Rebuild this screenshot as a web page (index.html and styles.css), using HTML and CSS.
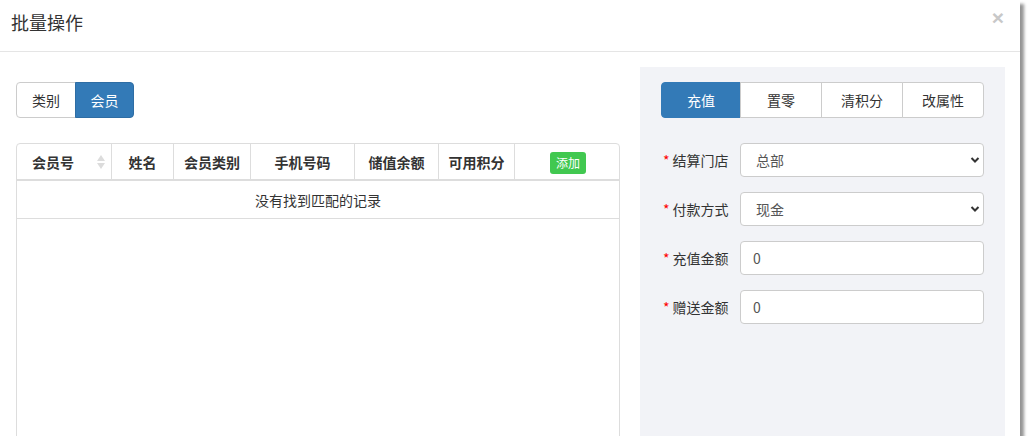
FILE: index.html
```html
<!DOCTYPE html>
<html lang="zh-CN">
<head>
<meta charset="utf-8">
<title>批量操作</title>
<link rel="stylesheet" href="styles.css">
</head>
<body>
<div class="modal">
  <div class="modal-header">
    <h4 class="modal-title">批量操作</h4>
    <button class="close" type="button">×</button>
  </div>
  <div class="modal-body">
    <div class="left">
      <div class="btn-group">
        <button class="btn" type="button">类别</button>
        <button class="btn active" type="button">会员</button>
      </div>
      <div class="table-wrap">
        <table class="grid">
          <colgroup>
            <col class="c1"><col class="c2"><col class="c3"><col class="c4"><col class="c5"><col class="c6"><col class="c7">
          </colgroup>
          <thead>
            <tr>
              <th class="sortable">会员号<span class="sort"><svg width="8" height="16" viewBox="0 0 8 16"><path d="M4 1 L8 7 L0 7 Z" fill="#dcdcdc"/><path d="M4 15 L8 9 L0 9 Z" fill="#dcdcdc"/></svg></span></th>
              <th>姓名</th>
              <th>会员类别</th>
              <th>手机号码</th>
              <th>储值余额</th>
              <th>可用积分</th>
              <th><button class="btn-add" type="button">添加</button></th>
            </tr>
          </thead>
          <tbody>
            <tr><td colspan="7" class="empty">没有找到匹配的记录</td></tr>
          </tbody>
        </table>
      </div>
    </div>
    <div class="right">
      <div class="tabs">
        <button class="tab active" type="button">充值</button>
        <button class="tab" type="button">置零</button>
        <button class="tab" type="button">清积分</button>
        <button class="tab" type="button">改属性</button>
      </div>
      <form class="form">
        <div class="row">
          <label class="label"><span class="req">*</span>结算门店</label>
          <div class="select-wrap">
            <select class="control select"><option>总部</option></select>
            <svg class="chev" width="10" height="8" viewBox="0 0 10 8"><path d="M1.5 2 L5 5.5 L8.5 2" fill="none" stroke="#333" stroke-width="2"/></svg>
          </div>
        </div>
        <div class="row">
          <label class="label"><span class="req">*</span>付款方式</label>
          <div class="select-wrap">
            <select class="control select"><option>现金</option></select>
            <svg class="chev" width="10" height="8" viewBox="0 0 10 8"><path d="M1.5 2 L5 5.5 L8.5 2" fill="none" stroke="#333" stroke-width="2"/></svg>
          </div>
        </div>
        <div class="row">
          <label class="label"><span class="req">*</span>充值金额</label>
          <input class="control input" type="text" value="0">
        </div>
        <div class="row">
          <label class="label"><span class="req">*</span>赠送金额</label>
          <input class="control input" type="text" value="0">
        </div>
      </form>
    </div>
  </div>
</div>
</body>
</html>
```

FILE: styles.css
```css
html, body {
  margin: 0;
  padding: 0;
  background: #ffffff;
}
body {
  font-family: "Noto Sans CJK SC", "Liberation Sans", sans-serif;
  font-size: 14px;
  color: #333;
}
.modal {
  width: 1020px;
  height: 436px;
  background: #fff;
  box-shadow: 4px 4px 3px rgba(0, 0, 0, 0.42);
  display: flex;
  flex-direction: column;
  overflow: hidden;
}
.modal-header {
  height: 51px;
  border-bottom: 1px solid #e5e5e5;
  display: flex;
  align-items: center;
  justify-content: space-between;
  padding: 0 16px 0 11px;
  flex: none;
}
.modal-title {
  margin: 0;
  font-size: 18px;
  font-weight: normal;
  line-height: 22px;
  color: #333;
  position: relative;
  top: -4px;
}
.close {
  border: 0;
  background: none;
  padding: 0;
  font-family: "Liberation Sans", sans-serif;
  font-size: 21px;
  font-weight: bold;
  line-height: 1;
  color: #c8c8c8;
  position: relative;
  top: -8px;
}
.modal-body {
  flex: 1;
  min-height: 0;
  display: flex;
  gap: 20px;
  padding: 15px 15px 0 16px;
}
.left {
  width: 604px;
  padding-top: 15px;
  display: flex;
  flex-direction: column;
  flex: none;
}
.btn-group {
  display: flex;
}
.btn {
  box-sizing: border-box;
  height: 36px;
  padding: 0;
  border: 1px solid #ccc;
  background: #fff;
  font-family: inherit;
  font-size: 14px;
  color: #333;
  line-height: 20px;
  white-space: nowrap;
}
.btn:first-child {
  border-radius: 4px 0 0 4px;
  width: 60px;
}
.btn:last-child {
  border-radius: 0 4px 4px 0;
  width: 59px;
  margin-left: -1px;
}
.btn.active {
  background: #337ab7;
  border-color: #2e6da4;
  color: #fff;
}
.table-wrap {
  margin-top: 25px;
  border: 1px solid #ddd;
  border-radius: 4px 4px 0 0;
  height: 340px;
  flex: none;
}
.grid {
  width: 602px;
  border-collapse: separate;
  border-spacing: 0;
  table-layout: fixed;
}
.c1 { width: 94px; }
.c2 { width: 62px; }
.c3 { width: 77px; }
.c4 { width: 104px; }
.c5 { width: 84px; }
.c6 { width: 76px; }
.c7 { width: 105px; }
.grid th {
  height: 35px;
  padding: 0;
  font-weight: bold;
  text-align: center;
  border-bottom: 2px solid #ddd;
  border-left: 1px solid #ddd;
  line-height: 20px;
}
.grid th:first-child {
  border-left: 0;
}
.grid th.sortable {
  text-align: left;
  padding-left: 15px;
  position: relative;
}
.sort {
  position: absolute;
  right: 6px;
  top: 10px;
  line-height: 0;
}
.btn-add {
  width: 36px;
  height: 22px;
  padding: 0;
  border: 0;
  border-radius: 3px;
  background: #41c850;
  color: #fff;
  font-family: inherit;
  font-size: 12px;
  line-height: 22px;
  position: relative;
  left: 1px;
  top: 1px;
}
.grid td.empty {
  height: 37px;
  padding: 0;
  text-align: center;
  border-bottom: 1px solid #ddd;
  line-height: 20px;
}
.right {
  width: 365px;
  flex: none;
  background: #f2f3f7;
  padding: 15px 21px;
  box-sizing: border-box;
}
.tabs {
  display: flex;
}
.tab {
  box-sizing: border-box;
  width: 81px;
  height: 36px;
  padding: 0;
  border: 1px solid #ccc;
  background: #fff;
  font-family: inherit;
  font-size: 14px;
  color: #333;
  margin-left: -1px;
}
.tab:first-child {
  margin-left: 0;
  width: 80px;
  border-radius: 4px 0 0 4px;
}
.tab:nth-child(2),
.tab:nth-child(3) {
  width: 82px;
}
.tab:last-child {
  border-radius: 0 4px 4px 0;
  width: 82px;
}
.tab.active {
  background: #337ab7;
  border-color: #337ab7;
  color: #fff;
}
.form {
  margin-top: 25px;
  display: flex;
  flex-direction: column;
  gap: 15px;
}
.row {
  display: flex;
  align-items: center;
  height: 34px;
}
.label {
  width: 79px;
  flex: none;
  padding-left: 2px;
  box-sizing: border-box;
  color: #333;
  font-size: 14px;
  line-height: 20px;
}
.req {
  color: #f00;
  margin-right: 3px;
}
.select-wrap {
  position: relative;
  flex: 1;
  height: 34px;
}
.control {
  box-sizing: border-box;
  height: 34px;
  border: 1px solid #ccc;
  border-radius: 4px;
  background: #fff;
  font-family: inherit;
  font-size: 14px;
  color: #555;
}
.select {
  width: 100%;
  appearance: none;
  -webkit-appearance: none;
  padding: 0 24px 0 15px;
}
.chev {
  position: absolute;
  right: 4px;
  top: 13px;
}
.input {
  flex: 1;
  padding: 0 12px;
  min-width: 0;
}
```
